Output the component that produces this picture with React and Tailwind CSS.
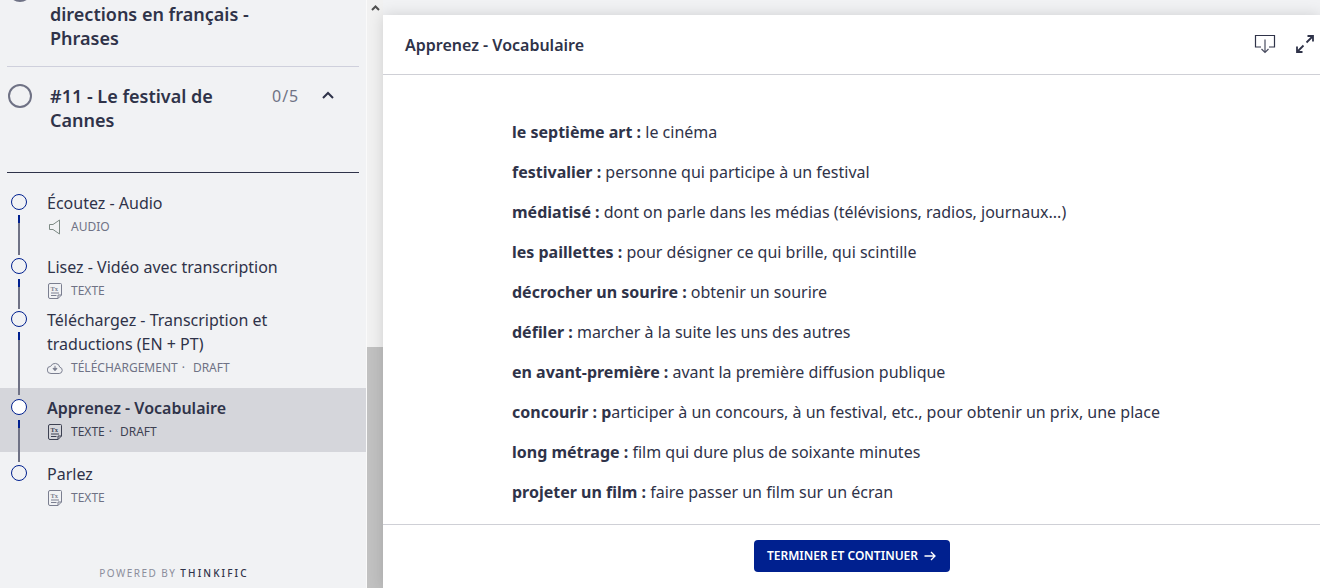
import React from 'react';

const SpeakerIcon = () => (
  <svg width="14" height="16" viewBox="0 0 14 16" fill="none" stroke="#7d8a84" strokeWidth="1" className="flex-shrink-0">
    <path d="M1.5 5.5h3.5L11.5 1v14L5 10.5H1.5z" strokeLinejoin="round" />
  </svg>
);

const TextIcon = ({ dark }) => {
  const color = dark ? '#3d4152' : '#7b7f90';
  return (
    <svg width="14" height="16" viewBox="0 0 14 16" fill="none" stroke={color} strokeWidth="1" className="flex-shrink-0">
      <path d="M3 .5h9.5a1 1 0 0 1 1 1V12L10 15.5H2a1.500 1.500 0 0 1-1.500-1.500V2A1.500 1.500 0 0 1 2 .5z" />
      <path d="M13.500 12H10v3.500" />
      <path d="M3 10h8M3 12.500h5.500" />
      <text x="2.500" y="7.500" fontSize="6.500" fontWeight="700" fill={color} stroke="none" fontFamily="'Liberation Serif', serif">Tx</text>
    </svg>
  );
};

const CloudIcon = () => (
  <svg width="16" height="12" viewBox="0 0 16 12" fill="none" className="flex-shrink-0">
    <path d="M4 11.500h8.200a3.200 3.200 0 0 0 .6-6.300A4.800 4.800 0 0 0 3.700 4.300 3.600 3.600 0 0 0 4 11.500z" stroke="#7b7f90" strokeWidth="1" />
    <path d="M8 3.800v4.200M6 6.400l2 2.300 2-2.300z" stroke="#7b7f90" strokeWidth="1" fill="#7b7f90" />
  </svg>
);

const lessons = [
  { title: ['Écoutez - Audio'], kind: 'AUDIO', icon: <SpeakerIcon />, row: 'h-[64px] pt-[8px]', line: 'h-[40px]' },
  { title: ['Lisez - Vidéo avec transcription'], kind: 'TEXTE', icon: <TextIcon />, row: 'h-[53px] pt-[8px]', line: 'h-[30px]' },
  { title: ['Téléchargez - Transcription et', 'traductions (EN + PT)'], kind: 'TÉLÉCHARGEMENT', draft: true, wide: true, icon: <CloudIcon />, row: 'h-[88px] pt-[8px]', line: 'h-[63px]' },
  { title: ['Apprenez - Vocabulaire'], kind: 'TEXTE', draft: true, active: true, icon: <TextIcon dark />, row: 'h-[64px] pt-[8px]', line: 'h-[42px]' },
  { title: ['Parlez'], kind: 'TEXTE', icon: <TextIcon />, row: 'h-[64px] pt-[10px]', last: true },
];

const LessonRow = ({ lesson }) => (
  <div className={`relative pl-[47px] ${lesson.row} ${lesson.active ? 'bg-[#d5d6db]' : ''}`}>
    <span className={`absolute left-[11px] w-4 h-4 rounded-full border-[1.5px] border-[#00208f] ${lesson.last ? 'top-[13px]' : 'top-[11px]'} ${lesson.active ? 'bg-white' : 'bg-[#f1f2f4]'}`} />
    {!lesson.last && (
      <span className={`absolute z-10 left-[18px] top-[32px] w-[2px] bg-[#6f7285] ${lesson.line}`}>
        <span className="block h-2 bg-[#00208f]" />
      </span>
    )}
    {lesson.title.map(line => (
      <div key={line} className={`text-base leading-6 text-[#2f3349] whitespace-nowrap ${lesson.active ? 'font-semibold' : ''}`}>{line}</div>
    ))}
    <div className={`flex items-center h-6 text-xs ${lesson.active ? 'text-[#3d4152]' : 'text-[#6f7285]'}`}>
      <span className={`flex justify-center ${lesson.wide ? 'w-[16px] ml-0 mr-[8px]' : 'w-[14px] ml-[1px] mr-[9px]'}`}>{lesson.icon}</span>
      <span>{lesson.kind}</span>
      {lesson.draft && <span className="ml-1">·</span>}
      {lesson.draft && <span className="ml-[8px]">DRAFT</span>}
    </div>
  </div>
);

const Sidebar = () => (
  <div className="relative w-[367px] h-full overflow-hidden flex-shrink-0 bg-[#f1f2f4] border-r border-[#fafafa]">
    <div className="-mt-[22px]">
      <div className="mx-[7px] pb-4 border-b border-[#cfd0dc]">
        <div className="flex items-start pl-[1px]">
          <span className="w-6 h-6 rounded-full border-2 border-[#6f7285] flex-shrink-0" />
          <div className="ml-[18px] text-lg leading-6 font-semibold text-[#2f3349] whitespace-nowrap">
            <div>#10 - Demander des</div>
            <div>directions en français -</div>
            <div>Phrases</div>
          </div>
        </div>
      </div>

      <div className="mx-[7px] pt-[17px] h-[106px] border-b border-[#2f3349]">
        <div className="flex items-start pl-[1px]">
          <span className="w-6 h-6 rounded-full border-2 border-[#6f7285] flex-shrink-0" />
          <div className="ml-[18px] w-[214px] text-lg leading-6 font-semibold text-[#2f3349]">
            #11 - Le festival de Cannes
          </div>
          <span className="ml-[8px] text-base leading-6 text-[#6f7285] tracking-[1px]">0/5</span>
          <svg width="14" height="24" viewBox="0 0 14 24" fill="none" stroke="#2f3349" strokeWidth="2" className="ml-[22px] -mt-[1px]">
            <path d="M2 15l5-5 5 5" />
          </svg>
        </div>
      </div>

      <div className="mt-[10px]">
        {lessons.map(lesson => (
          <LessonRow key={lesson.title[0]} lesson={lesson} />
        ))}
      </div>
    </div>

    <div className="absolute bottom-[8px] left-0 w-[348px] text-center text-[10px] leading-[14px] tracking-[1.45px] text-[#8b8d9b] whitespace-nowrap">
      POWERED BY <span className="text-[#2f3349] font-medium tracking-[2.1px]">THINKIFIC</span>
    </div>
  </div>
);

const Scrollbar = () => (
  <div className="w-4 h-full flex-shrink-0 flex flex-col bg-[#f1f1f1]">
    <div className="h-[347px] flex-shrink-0 flex justify-center pt-[5px]">
      <svg width="9" height="6" viewBox="0 0 9 6" fill="none" stroke="#505050" strokeWidth="2">
        <path d="M1 5l3.500-3.500L8 5" />
      </svg>
    </div>
    <div className="flex-1 bg-[#c1c1c1]" />
  </div>
);

const vocabulary = [
  ['le septième art : ', 'le cinéma'],
  ['festivalier : ', 'personne qui participe à un festival'],
  ['médiatisé : ', 'dont on parle dans les médias (télévisions, radios, journaux...)'],
  ['les paillettes : ', 'pour désigner ce qui brille, qui scintille'],
  ['décrocher un sourire : ', 'obtenir un sourire'],
  ['défiler : ', 'marcher à la suite les uns des autres'],
  ['en avant-première : ', 'avant la première diffusion publique'],
  ['concourir : p', 'articiper à un concours, à un festival, etc., pour obtenir un prix, une place'],
  ['long métrage : ', 'film qui dure plus de soixante minutes'],
  ['projeter un film : ', 'faire passer un film sur un écran'],
];

const Main = () => (
  <div className="flex-1 min-w-0 h-full pt-[15px] bg-[#f1f2f4]">
    <div className="h-full bg-white flex flex-col shadow-[0_0_14px_rgba(0,0,0,0.14)]">
      <div className="h-[60px] flex-shrink-0 flex items-center justify-between pl-[22px] pr-[6px] border-b border-[#cfd0d6]">
        <h1 className="text-base font-semibold text-[#2f3349]">Apprenez - Vocabulaire</h1>
        <div className="flex items-center gap-[20px] -mt-[2px]">
          <svg width="22" height="20" viewBox="0 0 22 20" fill="none" stroke="#2f3349" strokeWidth="1.200">
            <path d="M7 13H1.500V1.500h19V13H15" />
            <path d="M11 5.500v13M7.500 15l3.500 3.500 3.500-3.500" stroke="#4a4d60" />
          </svg>
          <svg width="18" height="18" viewBox="0 0 18 18" fill="none" stroke="#2f3349" strokeWidth="1.800">
            <path d="M10.500 7.500L17 1M11.500 1H17v5.500M7.500 10.500L1 17M1 11.500V17h5.500" />
          </svg>
        </div>
      </div>

      <div className="flex-1 min-h-0 overflow-hidden pl-[129px] pt-[45px]">
        {vocabulary.map(([term, meaning]) => (
          <p key={term} className="mb-4 text-base leading-6 text-[#2f3349] whitespace-nowrap">
            <strong className="font-bold">{term}</strong>{meaning}
          </p>
        ))}
      </div>

      <div className="h-[64px] flex-shrink-0 flex items-center justify-center border-t border-[#cfd0d6] -translate-x-[0px]">
        <button className="w-[196px] h-8 rounded bg-[#00208f] text-white text-xs font-semibold flex items-center justify-center gap-[6px] -mt-[2px]">
          TERMINER ET CONTINUER
          <svg width="12" height="10" viewBox="0 0 12 10" fill="none" stroke="white" strokeWidth="1.300">
            <path d="M.5 5h10.500M7 1l4 4-4 4" />
          </svg>
        </button>
      </div>
    </div>
  </div>
);

export default function App() {
  return (
    <div className="flex w-full h-screen overflow-hidden font-['Noto_Sans',sans-serif]">
      <Sidebar />
      <Scrollbar />
      <Main />
    </div>
  );
}
